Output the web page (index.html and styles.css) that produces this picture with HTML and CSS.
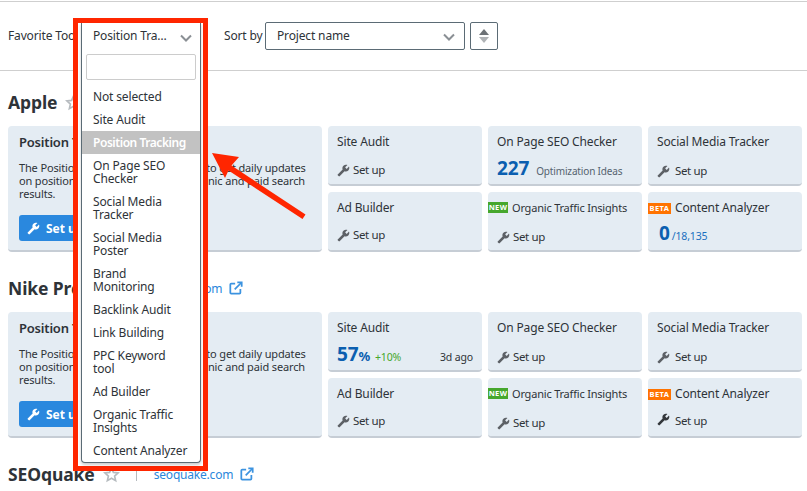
FILE: index.html
```html
<!DOCTYPE html>
<html lang="en">
<head>
<meta charset="utf-8">
<title>Projects</title>
<link rel="stylesheet" href="styles.css">
</head>
<body>
<svg class="defs" aria-hidden="true">
  <symbol id="wrench" viewBox="0 0 24 24"><path transform="matrix(-1 0 0 1 24 0)" d="M22.7 19.2l-9.1-9.1c.9-2.3.4-5-1.5-6.9-2-2-5-2.4-7.4-1.3L9 6.2 6.2 9 1.9 4.700C.700 7.100 1.200 10.100 3.200 12.100c1.900 1.900 4.600 2.400 6.900 1.500l9.100 9.100c.4.4 1 .4 1.400 0l2.100-2.100c.4-.4.4-1.100 0-1.400z"/></symbol>
  <symbol id="star" viewBox="0 0 24 24"><path fill="none" stroke="currentColor" stroke-width="2.400" stroke-linejoin="miter" d="M12 3l2.700 6.100 6.600.7-4.900 4.400 1.400 6.500L12 17.400l-5.800 3.300 1.400-6.500-4.900-4.400 6.600-.7z"/></symbol>
  <symbol id="ext" viewBox="0 0 16 16"><path fill="none" stroke="currentColor" stroke-width="2" d="M7 3H2.500a1 1 0 0 0-1 1v9.500a1 1 0 0 0 1 1H12a1 1 0 0 0 1-1V9M6.500 9.500L14 2"/><path fill="currentColor" d="M9.500 0.500H15.500V6.500L13.500 6.500V2.500H9.500z"/></symbol>
  <symbol id="chev" viewBox="0 0 12 8"><path fill="none" stroke="currentColor" stroke-width="2" d="M1 1.500l5 5 5-5"/></symbol>
</svg>

<div class="page">
  <header class="toolbar">
    <span class="tool-label">Favorite Tools</span>
    <div class="tool-select">
      <div class="frame">
        <div class="dropdown">
          <div class="dropdown-head">
            <span>Position Tra…</span>
            <svg class="chev"><use href="#chev"/></svg>
          </div>
          <input class="search" type="text" aria-label="Search">
          <ul class="options">
            <li>Not selected</li>
            <li>Site Audit</li>
            <li class="active">Position Tracking</li>
            <li>On Page SEO<br>Checker</li>
            <li>Social Media<br>Tracker</li>
            <li>Social Media<br>Poster</li>
            <li>Brand<br>Monitoring</li>
            <li>Backlink Audit</li>
            <li>Link Building</li>
            <li>PPC Keyword<br>tool</li>
            <li>Ad Builder</li>
            <li>Organic Traffic<br>Insights</li>
            <li>Content Analyzer</li>
          </ul>
        </div>
      </div>
    </div>
    <span class="sort-label">Sort by</span>
    <div class="select"><span>Project name</span><svg class="chev"><use href="#chev"/></svg></div>
    <button class="sort-btn" aria-label="Sort direction"><i class="tri-up"></i><i class="tri-down"></i></button>
  </header>

  <svg class="arrow" viewBox="205 145 105 78" aria-hidden="true">
    <path d="M212 153L239 157L231.500 165.500L305.500 214.500L302.500 219L228.500 170.500L225 178z"/>
  </svg>

  <main class="main">
    <section class="project">
      <div class="project-head">
        <h2>Apple</h2>
        <svg class="star"><use href="#star"/></svg>
        <i class="divider"></i>
        <a class="site">apple.com</a>
        <svg class="ext"><use href="#ext"/></svg>
      </div>
      <div class="grid">
        <article class="card big">
          <h3>Position Tracking</h3>
          <p>The Position Tracking tool allows you to get daily updates<br>on positions of your keywords in organic and paid search<br>results.</p>
          <button class="cta"><svg class="wr"><use href="#wrench"/></svg>Set up</button>
        </article>
        <article class="card"><h4>Site Audit</h4><div class="setup"><svg class="wr"><use href="#wrench"/></svg>Set up</div></article>
        <article class="card"><h4>On Page SEO Checker</h4><div class="stat"><b class="num">227</b><span class="ideas">Optimization Ideas</span></div></article>
        <article class="card low"><h4>Social Media Tracker</h4><div class="setup wide"><svg class="wr"><use href="#wrench"/></svg>Set up</div></article>
        <article class="card high"><h4>Ad Builder</h4><div class="setup"><svg class="wr"><use href="#wrench"/></svg>Set up</div></article>
        <article class="card low"><div class="badged"><span class="badge new">NEW</span><h4 class="small">Organic Traffic Insights</h4></div><div class="setup"><svg class="wr"><use href="#wrench"/></svg>Set up</div></article>
        <article class="card high"><div class="badged"><span class="badge beta">BETA</span><h4>Content Analyzer</h4></div><div class="stat quota"><b class="num">0</b><span class="total">/18,135</span></div></article>
      </div>
    </section>

    <section class="project">
      <div class="project-head">
        <h2>Nike Project</h2>
        <svg class="star"><use href="#star"/></svg>
        <i class="divider"></i>
        <a class="site">nike.com</a>
        <svg class="ext"><use href="#ext"/></svg>
      </div>
      <div class="grid">
        <article class="card big">
          <h3>Position Tracking</h3>
          <p>The Position Tracking tool allows you to get daily updates<br>on positions of your keywords in organic and paid search<br>results.</p>
          <button class="cta"><svg class="wr"><use href="#wrench"/></svg>Set up</button>
        </article>
        <article class="card"><h4>Site Audit</h4><div class="stat audit"><b class="num">57</b><b class="pct">%</b><span class="delta">+10%</span><span class="ago">3d ago</span></div></article>
        <article class="card low"><h4>On Page SEO Checker</h4><div class="setup"><svg class="wr"><use href="#wrench"/></svg>Set up</div></article>
        <article class="card low"><h4>Social Media Tracker</h4><div class="setup wide"><svg class="wr"><use href="#wrench"/></svg>Set up</div></article>
        <article class="card high"><h4>Ad Builder</h4><div class="setup"><svg class="wr"><use href="#wrench"/></svg>Set up</div></article>
        <article class="card low"><div class="badged"><span class="badge new">NEW</span><h4 class="small">Organic Traffic Insights</h4></div><div class="setup"><svg class="wr"><use href="#wrench"/></svg>Set up</div></article>
        <article class="card high"><div class="badged"><span class="badge beta">BETA</span><h4>Content Analyzer</h4></div><div class="setup wide dark"><svg class="wr"><use href="#wrench"/></svg>Set up</div></article>
      </div>
    </section>

    <section class="project">
      <div class="project-head">
        <h2>SEOquake</h2>
        <svg class="star"><use href="#star"/></svg>
        <i class="divider"></i>
        <a class="site">seoquake.com</a>
        <svg class="ext"><use href="#ext"/></svg>
      </div>
    </section>
  </main>
</div>
```

FILE: styles.css
```css
* { box-sizing: border-box; }
html, body { margin: 0; padding: 0; }
body {
  font-family: "Noto Sans", "Open Sans", sans-serif;
  font-size: 12px;
  letter-spacing: -.15px;
  color: #2e3338;
  background: #fff;
  overflow: hidden;
  height: 491px;
}
.defs { position: absolute; width: 0; height: 0; }
.page { position: relative; padding-top: 1px; }

/* toolbar */
.toolbar {
  height: 70px;
  display: flex;
  align-items: center;
  padding-left: 8px;
  border-top: 1px solid #cfcfcf;
  border-bottom: 1px solid #cfcfcf;
}
.tool-label { width: 73px; white-space: nowrap; overflow: hidden; flex: none; margin-top: -2px; }
.tool-select { position: relative; width: 120px; height: 28px; flex: none; }
.sort-label { margin-left: 23px; width: 41px; flex: none; white-space: nowrap; margin-top: -2px; }
.select {
  width: 200px;
  height: 28px;
  display: flex;
  align-items: center;
  justify-content: space-between;
  padding: 0 9px 2px 11px;
  border: 1px solid #5b6b75;
  border-radius: 2px;
  flex: none;
}
.chev { width: 12px; height: 8px; color: #8a8f94; margin-top: 4px; }
.sort-btn {
  width: 28px;
  height: 28px;
  margin-left: 5px;
  padding: 0;
  background: #fff;
  border: 1px solid #5b6b75;
  border-radius: 2px;
  display: flex;
  flex-direction: column;
  align-items: center;
  justify-content: center;
  gap: 2px;
}
.tri-up, .tri-down { width: 0; height: 0; border-left: 5px solid transparent; border-right: 5px solid transparent; }
.tri-up { border-bottom: 6px solid #6d7276; }
.tri-down { border-top: 6px solid #b0b3b6; }

/* open dropdown with annotation frame */
.frame {
  position: absolute;
  left: -8px;
  top: -4px;
  width: 135px;
  height: 453px;
  border: 5px solid #ff2600;
  background: #fff;
  z-index: 2;
  padding-left: 3px;
}
.dropdown {
  width: 120px;
  height: 440px;
  background: #fff;
  border: 1px solid #5b6b75;
  border-top: 0;
  border-radius: 0 0 4px 4px;
  box-shadow: 0 2px 3px rgba(0, 0, 0, .2);
}
.dropdown-head {
  height: 27px;
  display: flex;
  align-items: center;
  justify-content: space-between;
  padding: 0 8px 2px 11px;
}
.search {
  display: block;
  width: 110px;
  height: 26px;
  margin: 4px 0 5px 4px;
  padding: 0;
  border: 1px solid #ccc;
  border-radius: 2px;
  background: #fff;
}
.options { list-style: none; margin: 0; padding: 0; }
.options li { padding: 5px 4px 5px 11px; line-height: 13px; white-space: nowrap; }
.options .active { background: #c2c2c2; color: #fff; font-weight: 600; letter-spacing: -.45px; }

.arrow { position: absolute; left: 205px; top: 145px; width: 105px; height: 78px; z-index: 3; }
.arrow path { fill: #ff2600; }

/* projects */
.main { padding: 18px 5px 0 8px; }
.project { margin-bottom: 23px; }
.project-head { height: 26px; margin-bottom: 11px; display: flex; align-items: center; letter-spacing: 0; }
.project-head h2 { margin: 0; font-size: 17.500px; font-weight: 700; line-height: 26px; letter-spacing: -.1px; }
.star { width: 17px; height: 17px; margin-left: 8px; color: #b6bbbf; }
.divider { width: 1px; height: 14px; background: #b6bbbf; margin: 0 17px 0 16px; }
.site { color: #2b87db; font-size: 12px; letter-spacing: -.2px; }
.ext { width: 14px; height: 14px; margin-left: 7px; color: #3c93e0; }

.grid {
  display: grid;
  grid-template-columns: repeat(5, 154px);
  grid-auto-rows: 60px;
  gap: 6px;
}
.card {
  background: #e4ecf3;
  border-bottom: 2px solid #c6cdd5;
  border-radius: 4px;
  padding: 8px 9px 6px;
  display: flex;
  flex-direction: column;
  justify-content: space-between;
}
.card.low { padding-bottom: 5px; }
.card.high { padding-bottom: 7px; }
.card h4 { margin: 0; font-size: 12px; font-weight: 400; line-height: 16px; white-space: nowrap; }
.card h4.small { font-size: 11px; letter-spacing: -.2px; }
.big { grid-column: span 2; grid-row: span 2; padding: 8px 11px; display: block; }
.big h3 { margin: 0; font-size: 13px; font-weight: 600; line-height: 16px; letter-spacing: -.2px; }
.big p { margin: 11px 0 15px; font-size: 11px; line-height: 13px; white-space: nowrap; }
.cta {
  width: 90px;
  height: 26px;
  padding: 0 0 0 8px;
  border: 0;
  border-radius: 3px;
  background: #2a88de;
  color: #fff;
  font: 700 12px "Noto Sans", sans-serif;
  display: flex;
  align-items: center;
  gap: 6px;
}
.cta .wr { fill: #fff; }
.wr { width: 13px; height: 13px; fill: #5d6166; flex: none; }
.setup { display: flex; align-items: center; gap: 3px; height: 16px; line-height: 16px; font-size: 11.500px; letter-spacing: -.35px; }
.setup.wide { gap: 5px; }
.setup.dark .wr { fill: #33373b; margin-top: -4px; }
.badged { display: flex; align-items: center; gap: 4px; margin-left: -9px; height: 16px; }
.badge {
  color: #fff;
  font: 700 7.500px/11px "Noto Sans", sans-serif;
  letter-spacing: .4px;
  height: 11px;
  text-align: center;
  flex: none;
}
.new { width: 20px; background: #46a72d; margin-top: -1px; }
.beta { width: 23px; background: #ff7300; }
.stat { display: flex; align-items: baseline; height: 22px; line-height: 22px; white-space: nowrap; margin-bottom: -1px; }
.num { font-size: 19px; font-weight: 700; color: #0b5fb0; }
.ideas { margin-left: 7px; font-size: 10px; color: #55636f; }
.quota { margin-left: 2px; }
.total { margin-left: 2px; font-size: 10.500px; color: #1a6fc0; }
.pct { font-size: 13px; color: #0b5fb0; }
.delta { margin-left: 5px; font-size: 10.500px; color: #46a72d; }
.ago { margin-left: auto; font-size: 10.500px; }
```
